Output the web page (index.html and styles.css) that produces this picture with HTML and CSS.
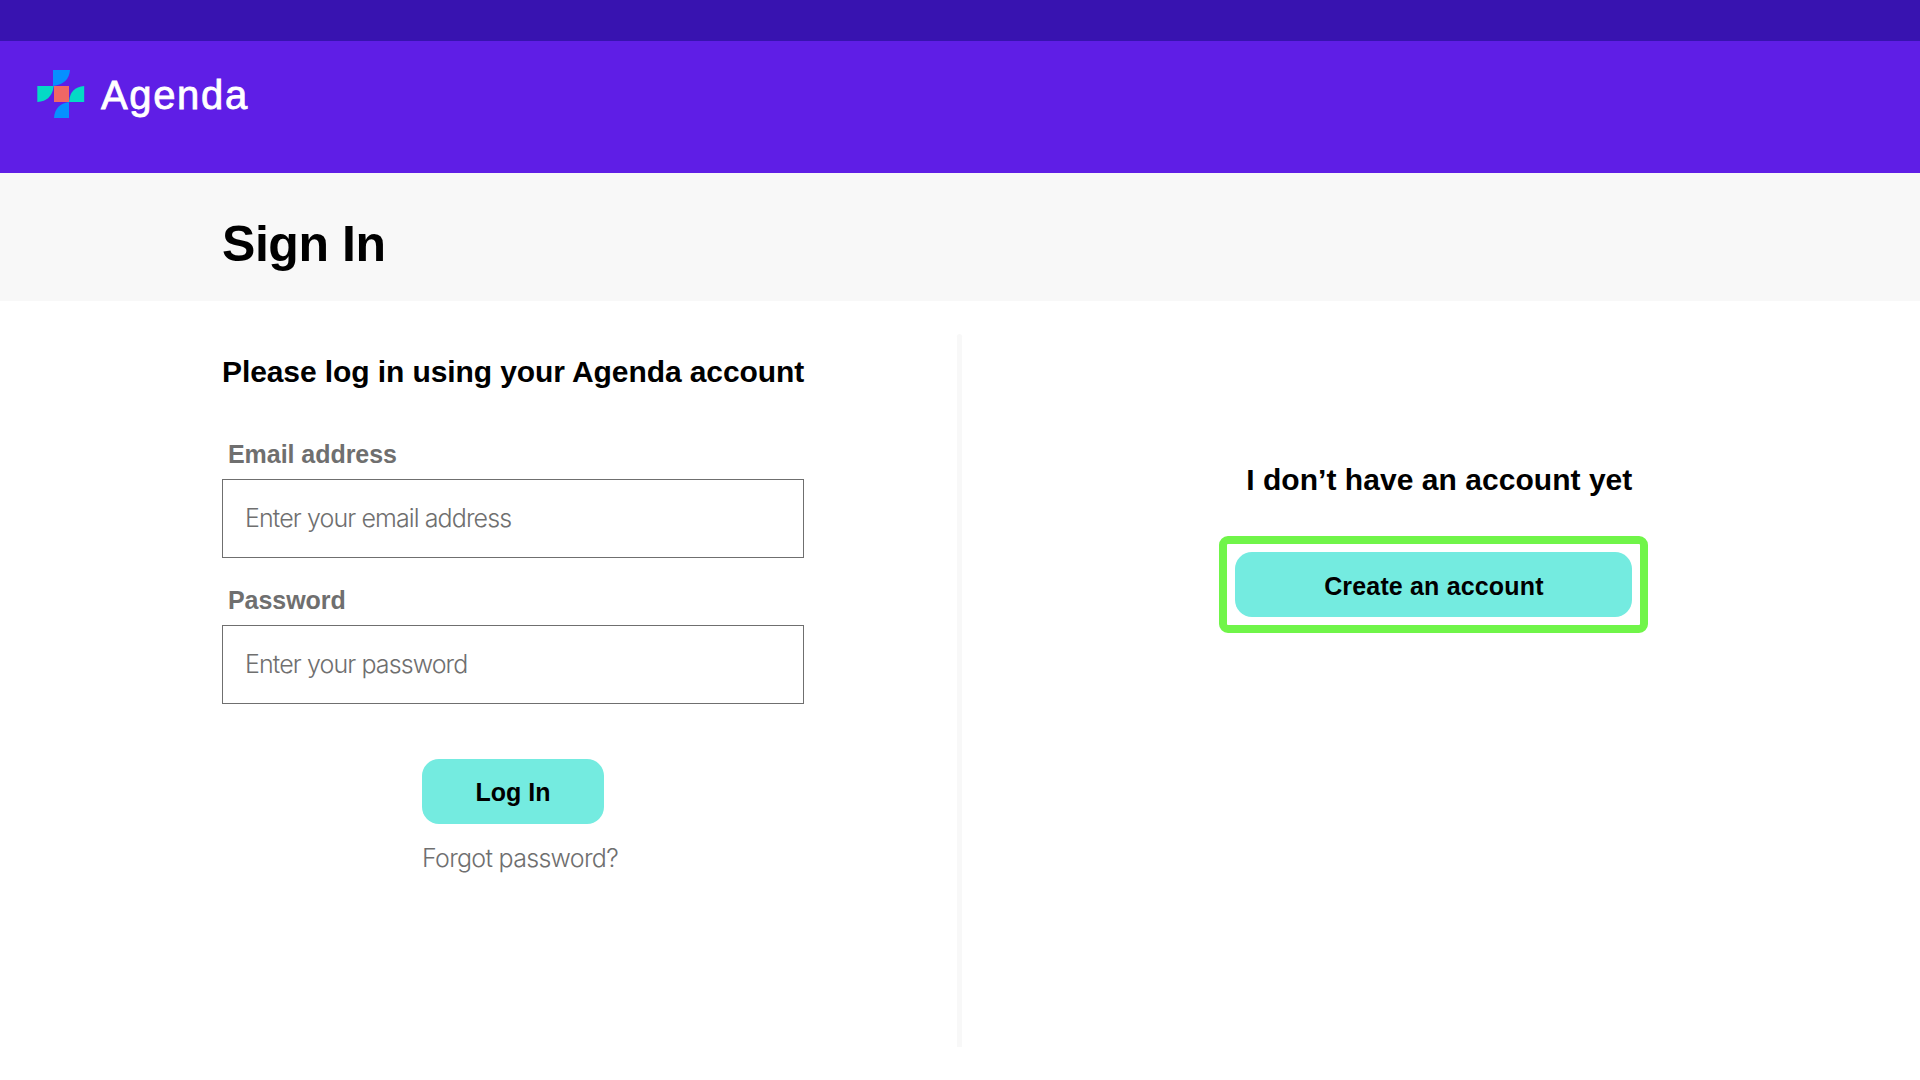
FILE: index.html
```html
<!DOCTYPE html>
<html lang="en">
<head>
<meta charset="utf-8">
<title>Agenda – Sign In</title>
<link rel="stylesheet" href="styles.css">
</head>
<body>
<div class="topbar"></div>
<header class="header">
  <svg class="logo" width="48" height="48" viewBox="37 70 48 48" aria-hidden="true">
    <path fill="#0690ff" d="M53 70H70Q69 84 53 86Z"/>
    <path fill="#04dac5" d="M37.3 86H53.7Q52 101 37.3 102Z"/>
    <path fill="#04dac5" d="M69 102Q70 87 84.2 86V102Z"/>
    <path fill="#0690ff" d="M54 118Q55 104 69 102V118Z"/>
    <path fill="#f06765" d="M54 86H69V102H54Z"/>
  </svg>
  <span class="brand">Agenda</span>
</header>
<div class="titlebar"><h1 class="title">Sign In</h1></div>
<main class="content">
  <form class="login">
    <h2 class="heading">Please log in using your Agenda account</h2>
    <label class="label" for="email">Email address</label>
    <input class="input" id="email" type="email" placeholder="Enter your email address">
    <label class="label" for="password">Password</label>
    <input class="input" id="password" type="password" placeholder="Enter your password">
    <div class="actions">
      <button class="button submit" type="button">Log In</button>
      <a class="forgot">Forgot password?</a>
    </div>
  </form>
  <div class="divider"></div>
  <section class="signup">
    <h2 class="heading signup-heading">I don’t have an account yet</h2>
    <div class="highlight"><button class="button create" type="button">Create an account</button></div>
  </section>
</main>
</body>
</html>
```
FILE: styles.css
```css
* { box-sizing: border-box; }
body {
  margin: 0;
  height: 1080px;
  background: #fff;
  color: #000;
  font-family: "Liberation Sans", Arial, sans-serif;
  overflow: hidden;
}
.topbar { height: 41px; background: #3813b0; }
.header {
  height: 132px;
  padding: 29px 37px;
  display: flex;
  align-items: flex-start;
  gap: 16px;
  background: #5f1ee6;
}
.logo { flex: none; }
.brand {
  color: #fff;
  font-size: 40px;
  line-height: 50px;
  letter-spacing: 1.65px;
  -webkit-text-stroke: 0.8px #fff;
}
.titlebar { height: 128px; padding: 41px 222px 0; background: #f8f8f8; }
.title {
  margin: 0;
  font-size: 50px;
  line-height: 60px;
  letter-spacing: -0.45px;
}
.content {
  display: grid;
  grid-template-columns: 582.4px 5px 533px;
  column-gap: 153px;
  padding-left: 222px;
}
.login { padding-top: 53px; }
.heading { margin: 0; font-size: 30px; line-height: 36px; white-space: nowrap; }
.login .heading { margin-bottom: 49px; letter-spacing: -0.09px; }
.label {
  display: block;
  padding-left: 6px;
  margin-bottom: 10px;
  font-size: 25px;
  line-height: 30px;
  font-weight: 700;
  letter-spacing: -0.05px;
  color: #6f6f6f;
}
.input {
  display: block;
  width: 582px;
  height: 79px;
  margin: 0 0 27px;
  padding: 0 22px 1px 22px;
  border: 1px solid #6f6f6f;
  border-radius: 0;
  background: #fff;
  font: 300 25px Inter, "Liberation Sans", sans-serif;
  letter-spacing: -0.9px;
}
.input::placeholder { color: #6f6f6f; opacity: 1; }
.actions {
  display: flex;
  flex-direction: column;
  align-items: flex-start;
  gap: 19px;
  padding: 28px 0 0 200px;
}
.button {
  height: 65px;
  padding: 1px 0 0;
  border: 0;
  border-radius: 17px;
  background: #74ebe0;
  color: #000;
  font: 700 25px "Liberation Sans", Arial, sans-serif;
}
.submit { width: 182px; }
.forgot {
  font: 300 25px/30px Inter, "Liberation Sans", sans-serif;
  letter-spacing: -0.7px;
  color: #6f6f6f;
  white-space: nowrap;
}
.divider { height: 713px; margin-top: 33px; border-radius: 3px 3px 0 0; background: #f8f8f8; }
.signup { width: 533px; padding: 161px 0 0 104px; }
.signup-heading { padding-right: 16px; text-align: right; letter-spacing: 0.04px; }
.highlight {
  display: flex;
  height: 97px;
  margin-top: 38px;
  padding: 8px;
  border: 8px solid #70f549;
  border-radius: 9px;
}
.create { width: 397px; padding-top: 3px; letter-spacing: 0.16px; }
```
